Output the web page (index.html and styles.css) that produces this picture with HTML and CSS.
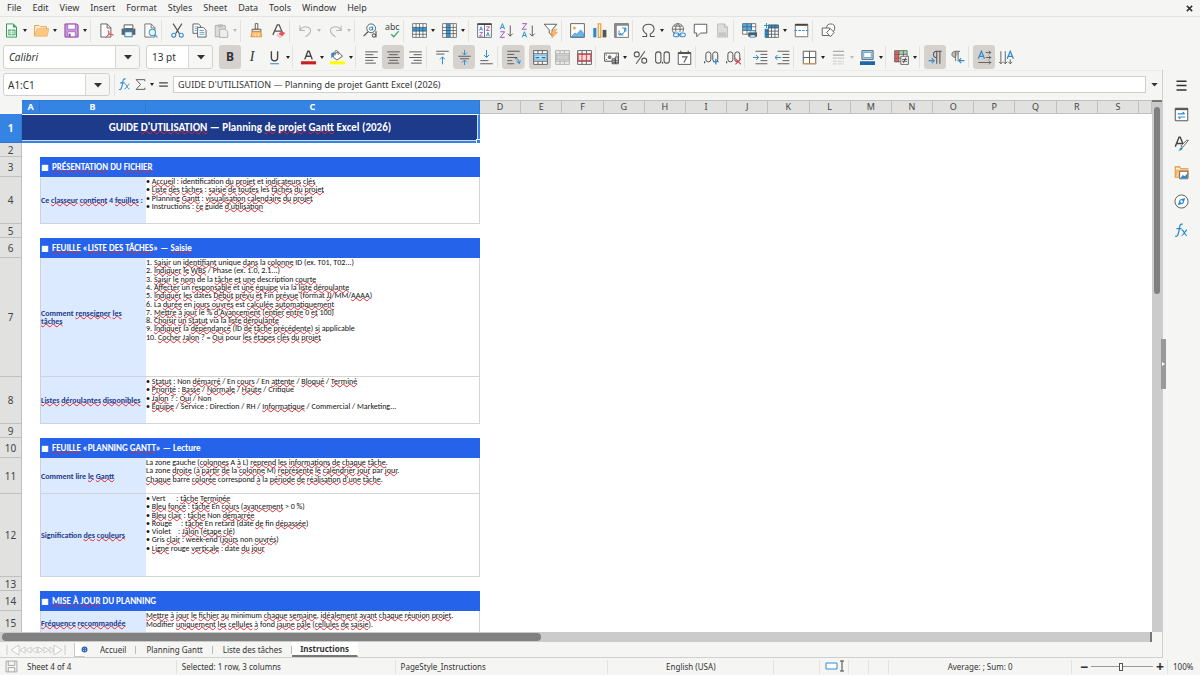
FILE: index.html
```html
<!DOCTYPE html>
<html lang="fr">
<head>
<meta charset="utf-8">
<title>Planning de projet Gantt</title>
<link rel="stylesheet" href="styles.css">
</head>
<body>
<svg class="sprite" aria-hidden="true">
  <symbol id="new" viewBox="0 0 24 24"><path d="M4 1.500h11l5 5v16H4z" fill="#fff" stroke="#2f9e56" stroke-width="1.600"/><path d="M14.500 1v6H20z" fill="#2f9e56"/><path d="M7 11h11v8H7z" fill="#7cc98f" stroke="#2f9e56"/><path d="M7 14h11M7 16.500h11M12 11v8" stroke="#fff"/></symbol>
  <symbol id="open" viewBox="0 0 24 24"><path d="M1 21V4h7l2 2h10v5" fill="#fff3df" stroke="#eb9a3a" stroke-width="1.500"/><path d="M1 21 5 9h19l-3 12z" fill="#fdc884" stroke="#f0a64d"/></symbol>
  <symbol id="save" viewBox="0 0 24 24"><path d="M1.500 1.500h19l2 2v19h-21z" fill="#c99adb" stroke="#9346a8" stroke-width="1.600"/><path d="M6 2h12v8H6zM6 14h12v8H6z" fill="#fff" stroke="#9346a8"/><path d="M9 17v5" stroke="#9346a8" stroke-width="3"/></symbol>
  <symbol id="pdf" viewBox="0 0 24 24"><path d="M3 1.500h10l6 6v15H3z" fill="#fff" stroke="#555" stroke-width="1.400"/><path d="M13 2v6h6" fill="none" stroke="#555" stroke-width="1.400"/><path d="M11 23c4-3 6-8 4-11-2 1 3 8 8 7-4-2-10 0-12 4z" fill="#fbb" stroke="#e0434c" stroke-width="1.300"/></symbol>
  <symbol id="print" viewBox="0 0 24 24"><path d="M5 3h14v6H5z" fill="#fff" stroke="#555" stroke-width="1.500"/><path d="M1 9h22v10H1z" fill="#5b6268"/><path d="M6 14h12v8H6z" fill="#eef6fc" stroke="#287cb7" stroke-width="1.500"/><path d="M3 11.500h18" stroke="#2e8acb"/></symbol>
  <symbol id="preview" viewBox="0 0 24 24"><path d="M3 1.500h10l6 6v15H3z" fill="#fff" stroke="#666" stroke-width="1.400"/><path d="M13 2v6h6" fill="none" stroke="#666" stroke-width="1.400"/><circle cx="15" cy="15" r="5" fill="#e6f3fb" stroke="#4a9bd3" stroke-width="1.700"/><path d="m18.500 18.500 4.500 4.500" stroke="#4a9bd3" stroke-width="2"/></symbol>
  <symbol id="cut" viewBox="0 0 24 24"><path d="m5 1 10 16M19 1 9 17" stroke="#555" stroke-width="1.800"/><circle cx="6" cy="19.500" r="3.200" fill="none" stroke="#318bce" stroke-width="1.700"/><circle cx="18" cy="19.500" r="3.200" fill="none" stroke="#318bce" stroke-width="1.700"/></symbol>
  <symbol id="copy" viewBox="0 0 24 24"><path d="M1.500 1.500h9l3 3v12h-12z" fill="#fff" stroke="#555" stroke-width="1.400"/><path d="M4 6h6M4 9h6M4 12h4" stroke="#338bc9"/><path d="M9 7h9l4.500 4.500v11H9z" fill="#fff" stroke="#555" stroke-width="1.400"/><path d="M12 12h7M12 15h8M12 18h8" stroke="#338bc9" stroke-width="1.200"/></symbol>
  <symbol id="paste" viewBox="0 0 24 24"><path d="M2 4h16v18H2z" fill="#dcdcda" stroke="#aaa" stroke-width="1.400"/><path d="M6 2h8v5H6z" fill="#bbb"/><path d="M9 10h9l4 4v9H9z" fill="#eee" stroke="#aaa" stroke-width="1.400"/></symbol>
  <symbol id="brush" viewBox="0 0 24 24"><path d="M10 1h4v9h-4z" fill="#fff" stroke="#555" stroke-width="1.500"/><path d="M5 10h14v4H5z" fill="#e8e8e8" stroke="#555" stroke-width="1.500"/><path d="M5 14h14l1 8H3z" fill="#fbc57f" stroke="#e69036" stroke-width="1.600"/><path d="M10 17v5m5-5v5" stroke="#fff"/></symbol>
  <symbol id="clear" viewBox="0 0 24 24"><path d="M3 19 10 3h3l6 14M6 13h11" fill="none" stroke="#555" stroke-width="2"/><path d="m9 20 8-7 6 3-8 8z" fill="#e9525a"/><path d="m9 20 3-3 6 4-3 3z" fill="#fcc"/></symbol>
  <symbol id="undo" viewBox="0 0 24 24"><path d="M3 4v8h8M3 12C8 3 22 5 20 14c-1 3-3 5-8 8" fill="none" stroke="#b7b7b5" stroke-width="1.700"/></symbol>
  <symbol id="redo" viewBox="0 0 24 24"><path d="M21 4v8h-8M21 12C16 3 2 5 4 14c1 3 3 5 8 8" fill="none" stroke="#b7b7b5" stroke-width="1.700"/></symbol>
  <symbol id="row" viewBox="0 0 24 24"><path d="M1 1h22v22H1z" fill="#fff"/><path d="M1 7h22v6H1z" fill="#2e9be6"/><path d="M1 1h22v22H1zM1 7h22M1 13h22M1 18h22M6.500 1v22M12 1v22M17.500 1v22" fill="none" stroke="#4d5559" stroke-width="1.200"/></symbol>
  <symbol id="col" viewBox="0 0 24 24"><path d="M1 1h22v22H1z" fill="#fff"/><path d="M7 1h6v22H7z" fill="#2e9be6"/><path d="M1 1h22v22H1zM1 7h22M1 12h22M1 17h22M7 1v22M13 1v22M18 1v22" fill="none" stroke="#4d5559" stroke-width="1.200"/></symbol>
  <symbol id="sort" viewBox="0 0 24 24"><path d="M1 1h22v22H1zM12 1v22" fill="#fff" stroke="#555" stroke-width="1.300"/><path d="M1 2h22" stroke="#444" stroke-width="2.500"/><g fill="none" stroke-width="1.400"><path d="m4 12 2.500-6L9 12M5 10h3M15 21l2.500-6 2.500 6M16 19h3" stroke="#2b8ad0"/><path d="M4 15h5l-5 6h5M15 6h5l-5 6h5" stroke="#a04db8"/></g></symbol>
  <symbol id="asc" viewBox="0 0 24 24"><g fill="none" stroke-width="1.500"><path d="m2 10 3.500-9L9 10M3 7h5" stroke="#2b8ad0"/><path d="M2 14h7l-7 9h7" stroke="#a04db8"/><path d="M18 4v17m-4-4 4 4 4-4" stroke="#555"/></g></symbol>
  <symbol id="desc" viewBox="0 0 24 24"><g fill="none" stroke-width="1.500"><path d="m2 23 3.500-9L9 23M3 20h5" stroke="#2b8ad0"/><path d="M2 1h7l-7 9h7" stroke="#a04db8"/><path d="M18 4v17m-4-4 4 4 4-4" stroke="#555"/></g></symbol>
  <symbol id="filter" viewBox="0 0 24 24"><path d="M2 2h20l-7.500 9v9L10 16v-5z" fill="#fff" stroke="#555" stroke-width="1.500"/><path d="m18 10-6 8h4l-2 6 9-9h-5l4-5z" fill="#fbbd6b" stroke="#ec9733"/></symbol>
  <symbol id="image" viewBox="0 0 24 24"><path d="M1 1h22v22H1z" fill="#fff" stroke="#555" stroke-width="1.400"/><circle cx="7" cy="8" r="2.500" fill="#f3a84d"/><path d="m2 22 6-6 3 2 6-7 5 6v5z" fill="#6eb4e4" stroke="#2583c5"/></symbol>
  <symbol id="chart" viewBox="0 0 24 24"><path d="M2 8h5v15H2z" fill="#2e8acb"/><path d="M10 1.500h4V23h-4z" fill="#fff0d8" stroke="#e9a13e" stroke-width="2"/><path d="M17 11h6v12h-6z" fill="#555"/></symbol>
  <symbol id="pivot" viewBox="0 0 24 24"><path d="M1 1h22v22H1z" fill="#fff" stroke="#666" stroke-width="1.400"/><path d="M1 3h22M3 1v22" stroke="#888" stroke-width="3"/><path d="M13 8h6v6m-3-3 3-3M8 12v7h7m-7 0 3-3M17 9c1 6-2 9-8 9" fill="none" stroke="#318bce" stroke-width="1.600"/></symbol>
  <symbol id="omega" viewBox="0 0 24 24"><path d="M2 21.500h7v-4C-1 11 3 2 12 2s13 9 3 15.500v4h7" fill="none" stroke="#555" stroke-width="1.700"/></symbol>
  <symbol id="link" viewBox="0 0 24 24"><path d="M11 1a9 9 0 1 0 .1 0M11 1c-5 5-5 13 0 18M11 1c5 5 5 13 0 18M2 10h18M4 5h14M4 15h14" fill="none" stroke="#555" stroke-width="1.300"/><path d="M6 14h18v10H6z" fill="#f5f5f3"/><rect x="4" y="16" width="9" height="6" rx="3" fill="none" stroke="#318bce" stroke-width="1.700"/><rect x="14" y="16" width="9" height="6" rx="3" fill="none" stroke="#318bce" stroke-width="1.700"/><path d="M10 19h7" stroke="#318bce" stroke-width="1.700"/></symbol>
  <symbol id="comment" viewBox="0 0 24 24"><path d="M2 2h20v14H12l-6 6v-6H2z" fill="#fff" stroke="#555" stroke-width="1.500"/></symbol>
  <symbol id="page" viewBox="0 0 24 24"><path d="M4 1.500h11l5 5v16H4z" fill="#ddd" stroke="#bbb" stroke-width="1.400"/><path d="M6 15h12v6H6z" fill="#c5c5c5"/><path d="M15 1v6h5" fill="none" stroke="#aaa"/></symbol>
  <symbol id="printarea" viewBox="0 0 24 24"><path d="M1 1h21v17H1z" fill="#fff"/><path d="M1 1h15v11H1z" fill="#56aee7"/><path d="M1 1h21v17H1zM1 6h21M1 12h21M8 1v17M15 1v17" fill="none" stroke="#4d5559" stroke-width="1.200"/><path d="M10 15h14v7H10z" fill="#555"/><path d="M13 12h8v3h-8zM13 19h8v4h-8z" fill="#cfe8f8" stroke="#287cb7"/></symbol>
  <symbol id="freeze" viewBox="0 0 24 24"><path d="M1 3h22v20H1z" fill="#fff"/><path d="M7 3h16v5H7zM1 9h6v14H1z" fill="#2e8acb"/><path d="M7 3h16v20H2M2 13h21M2 18h21M7 8h16M12 3v20M17.500 3v20M7 3v20" fill="none" stroke="#4d5559" stroke-width="1.300"/><path d="M4 0v8M0 4h8" stroke="#2e8acb" stroke-width="1.500"/></symbol>
  <symbol id="split" viewBox="0 0 24 24"><path d="M2 2h20v20H2z" fill="#fff" stroke="#666" stroke-width="1.400"/><path d="M2 3h20" stroke="#444" stroke-width="3"/><path d="M1 12h22" stroke="#318bce" stroke-width="1.600" stroke-dasharray="4 2"/></symbol>
  <symbol id="shapes" viewBox="0 0 24 24"><circle cx="15.500" cy="8" r="6.500" fill="#fff" stroke="#555" stroke-width="1.400"/><path d="M2 8h12v12H2z" fill="#fff" stroke="#555" stroke-width="1.400"/><path d="m15 9 6 6-6 7-6-7z" fill="#fff" stroke="#555" stroke-width="1.400"/></symbol>
  <symbol id="underline" viewBox="0 0 24 24"><path d="M7 2v10c0 7 10 7 10 0V2" fill="none" stroke="#444" stroke-width="2.200"/><path d="M5 22h14" stroke="#3a87d6" stroke-width="1.700"/></symbol>
  <symbol id="fontcolor" viewBox="0 0 24 24"><path d="m6 15 5-13h2l5 13M8 10h8" fill="none" stroke="#444" stroke-width="2.200"/><path d="M0 18h24v5H0z" fill="#c9211e"/></symbol>
  <symbol id="fill" viewBox="0 0 24 24"><path d="m4 8 9-5 7 7-9 6-5-4z" fill="#fff" stroke="#555" stroke-width="1.500"/><path d="M8 9V2c3-3 6 0 5 6" fill="none" stroke="#555" stroke-width="1.300"/><path d="m7 3-5 2v8l4-4z" fill="#2e8acb"/><path d="M0 18h24v5H0z" fill="#ff0"/></symbol>
  <symbol id="left" viewBox="0 0 24 24"><path d="M2 3h20M2 7.500h13M2 12h20M2 16.500h13M2 21h17" stroke="#555" stroke-width="1.500"/></symbol>
  <symbol id="center" viewBox="0 0 24 24"><path d="M2 3h20M5 7.500h14M2 12h20M5 16.500h14M3 21h18" stroke="#555" stroke-width="1.500"/></symbol>
  <symbol id="right" viewBox="0 0 24 24"><path d="M2 3h20M9 7.500h13M2 12h20M9 16.500h13M5 21h17" stroke="#555" stroke-width="1.500"/></symbol>
  <symbol id="top" viewBox="0 0 24 24"><path d="M2 2h20M2 6.500h13" stroke="#555" stroke-width="1.500"/><path d="M12 23V11m-4 4 4-4 4 4" fill="none" stroke="#318bce" stroke-width="1.600"/></symbol>
  <symbol id="middle" viewBox="0 0 24 24"><path d="M2 10h20M5 14h14" stroke="#555" stroke-width="1.500"/><path d="M12 0v8M8 4l4 4 4-4M12 24v-8m-4 4 4-4 4 4" fill="none" stroke="#318bce" stroke-width="1.500"/></symbol>
  <symbol id="bottom" viewBox="0 0 24 24"><path d="M2 17h13M2 22h20" stroke="#555" stroke-width="1.500"/><path d="M12 0v12m-4-4 4 4 4-4" fill="none" stroke="#318bce" stroke-width="1.600"/></symbol>
  <symbol id="wrap" viewBox="0 0 24 24"><path d="M2 2h20M2 7h11M2 12h16M2 17h8M2 22h11" stroke="#555" stroke-width="1.500"/><path d="M14 14c5-1 7 2 7 7m-4-4 4 5 2-5" fill="none" stroke="#318bce" stroke-width="1.600"/></symbol>
  <symbol id="merge" viewBox="0 0 24 24"><path d="M1 1h22v22H1zM1 6h22M1 18h22M8 1v5M15 1v5M8 18v5M15 18v5" fill="#fff" stroke="#555" stroke-width="1.400"/><path d="M2 8h20v8H2z" fill="#bfe0f6" stroke="#318bce"/><path d="M4 12h6M14 12h6" stroke="#1c74b8" stroke-width="2"/></symbol>
  <symbol id="merge2" viewBox="0 0 24 24"><path d="M1 1h22v22H1zM1 6h22M1 18h22M8 1v5M15 1v5M8 18v5M15 18v5" fill="#eee" stroke="#aaa" stroke-width="1.400"/><path d="M2 8h20v8H2z" fill="#d0d0d0" stroke="#aaa"/></symbol>
  <symbol id="unmerge" viewBox="0 0 24 24"><path d="M1 1h22v22H1zM1 6h22M1 18h22M8 1v22M15 1v22" fill="#fff" stroke="#555" stroke-width="1.400"/><path d="M2 7h20v10H2zM8 7v10M15 7v10" fill="#fdd" stroke="#d8343c" stroke-width="1.500"/></symbol>
  <symbol id="money" viewBox="0 0 24 24"><path d="M1 5h22v13H1z" fill="#fff" stroke="#555" stroke-width="1.600"/><circle cx="9" cy="11.500" r="3" fill="#777"/><path d="M3 8h2M3 15h2M19 8h2" stroke="#555" stroke-width="1.500"/><path d="M13 14h5v8h-5zM18 11h5v11h-5z" fill="#ccc" stroke="#444" stroke-width="1.300"/><path d="M13 17h10M13 20h10" stroke="#444"/></symbol>
  <symbol id="percent" viewBox="0 0 24 24"><path d="M19 2 5 22" stroke="#555" stroke-width="1.700"/><circle cx="6" cy="7" r="4" fill="none" stroke="#555" stroke-width="1.700"/><circle cx="18" cy="17" r="4" fill="none" stroke="#555" stroke-width="1.700"/></symbol>
  <symbol id="decimal" viewBox="0 0 24 24"><g fill="none" stroke="#555" stroke-width="1.700"><rect x="1" y="3" width="8.500" height="18" rx="4"/><rect x="14.500" y="3" width="8.500" height="18" rx="4"/></g><path d="M11 19h2v3h-2z" fill="#555"/></symbol>
  <symbol id="date" viewBox="0 0 24 24"><path d="M2 4h20v19H2z" fill="#fff" stroke="#555" stroke-width="1.500"/><path d="M2 5h20" stroke="#555" stroke-width="3"/><path d="M6 1v4M18 1v4M8 11h8l-5 9" fill="none" stroke="#555" stroke-width="1.800"/></symbol>
  <symbol id="addDec" viewBox="0 0 24 24"><g fill="none" stroke="#555" stroke-width="1.600"><rect x="3" y="3" width="8" height="16" rx="4"/><rect x="14" y="3" width="8" height="16" rx="4"/></g><path d="M0 18h2v3H0z" fill="#555"/><path d="M19 14v9M14.500 18.500h9" stroke="#318bce" stroke-width="2"/></symbol>
  <symbol id="delDec" viewBox="0 0 24 24"><g fill="none" stroke="#555" stroke-width="1.600"><rect x="3" y="3" width="8" height="16" rx="4"/><rect x="14" y="3" width="8" height="16" rx="4"/></g><path d="M0 18h2v3H0z" fill="#555"/><path d="m15 14 9 9m0-9-9 9" stroke="#e0434c" stroke-width="1.700"/></symbol>
  <symbol id="indent" viewBox="0 0 24 24"><path d="M4 2h19M12 7h11M12 12h11M12 17h11M4 22h19" stroke="#555" stroke-width="1.500"/><path d="M0 12h9M5 8l4 4-4 4" fill="none" stroke="#318bce" stroke-width="1.600"/></symbol>
  <symbol id="outdent" viewBox="0 0 24 24"><path d="M4 2h19M12 7h11M12 12h11M12 17h11M4 22h19" stroke="#555" stroke-width="1.500"/><path d="M0 12h10M4 8l-4 4 4 4" fill="none" stroke="#318bce" stroke-width="1.600"/></symbol>
  <symbol id="borders" viewBox="0 0 24 24"><path d="M2 2h20v20H2zM12 2v20M2 12h20" fill="#fff" stroke="#555" stroke-width="1.500"/><path d="M1 22h22" stroke="#ee9f42" stroke-width="1.500"/></symbol>
  <symbol id="lines" viewBox="0 0 24 24"><path d="M3 2h18M3 8h18" stroke="#aaa" stroke-width="2"/><path d="M3 13h18" stroke="#bbb" stroke-width="2" stroke-dasharray="3 1"/><path d="M3 18h18M3 22h18" stroke="#bbb" stroke-width="2" stroke-dasharray="1 1"/></symbol>
  <symbol id="bordercolor" viewBox="0 0 24 24"><path d="M3 1h18v14H3z" fill="#a9d5f3" stroke="#555" stroke-width="1.400"/><path d="M6 4h12v8H6z" fill="#fff" stroke="#318bce"/><path d="M0 18h24v6H0z" fill="#1f65a9"/></symbol>
  <symbol id="cond" viewBox="0 0 24 24"><path d="M1 1h20v18H1z" fill="#fff"/><path d="M1 1h7v6H1zM1 13h7v6H1z" fill="#e85d5d"/><path d="M8 1h13v6H8z" fill="#9bdaa6"/><path d="M1 7h7v6H1z" fill="#e85d5d"/><path d="M1 1h20v18H1zM1 7h20M1 13h20M8 1v18M15 1v18" fill="none" stroke="#555" stroke-width="1.200"/><path d="M11 10h12v13H11z" fill="#fff" stroke="#555" stroke-width="1.400"/><path d="M13 15h8M13 18h8M19 12l-4 9" stroke="#333" stroke-width="1.300"/></symbol>
  <symbol id="ltr" viewBox="0 0 24 24"><path d="M14 12c-7 0-7-10 0-10h8M14 2v20M19 2v20" fill="none" stroke="#555" stroke-width="1.700"/><path d="M1 17h9m-4-4 4 4-4 4" fill="none" stroke="#318bce" stroke-width="1.700"/></symbol>
  <symbol id="rtl" viewBox="0 0 24 24"><path d="M9 12C1 12 1 2 9 2h7M9 2v16M13 2v16" fill="#bbb" stroke="#777" stroke-width="1.600"/><path d="M23 17h-9m4-4-4 4 4 4" fill="none" stroke="#318bce" stroke-width="1.700"/></symbol>
  <symbol id="dirh" viewBox="0 0 24 24"><path d="m2 14 5-12 5 12M4 10h6" fill="none" stroke="#318bce" stroke-width="2"/><path d="M14 4h8m-3-3 3 3-3 3M14 12h8m-3-3 3 3-3 3M2 20h20m-3-3 3 3-3 3" fill="none" stroke="#555" stroke-width="1.400"/></symbol>
  <symbol id="dirv" viewBox="0 0 24 24"><path d="m13 14 5-12 5 12M15 10h6" fill="none" stroke="#318bce" stroke-width="2"/><path d="M3 2v20m-3-3 3 3 3-3M10 2v20m-3-3 3 3 3-3M18 15v7m-3-3 3 3 3-3" fill="none" stroke="#555" stroke-width="1.400"/></symbol>
  <symbol id="fx" viewBox="0 0 24 24"><path d="M14 2c-5-2-5 5-6 10s-2 11-6 9M4 9h8" fill="none" stroke="#2a86cf" stroke-width="1.900"/><path d="M12 11c4-1 5 10 9 9M21 11c-3 0-6 10-9 9" fill="none" stroke="#2a86cf" stroke-width="1.800"/></symbol>
  <symbol id="sigma" viewBox="0 0 24 24"><path d="M20 6V3H4l8 9-8 9h16v-3" fill="none" stroke="#555" stroke-width="1.700"/></symbol>
  <symbol id="equals" viewBox="0 0 24 24"><path d="M4 9h16M4 15h16" stroke="#444" stroke-width="2.400"/></symbol>
  <symbol id="down" viewBox="0 0 8 5"><path d="M0 0h8L4 4.500z" fill="currentColor"/></symbol>
  <symbol id="menu" viewBox="0 0 24 24"><path d="M4 5h16M4 12h16M4 19h16" stroke="#333" stroke-width="2.400"/></symbol>
  <symbol id="props" viewBox="0 0 24 24"><path d="M2 2h20v20H2z" fill="#fff" stroke="#555" stroke-width="1.600"/><path d="M2 3.500h20" stroke="#555" stroke-width="3"/><path d="M6 11h11m-3-3 3 3M18 16H7m3 3-3-3" fill="none" stroke="#318bce" stroke-width="1.700"/></symbol>
  <symbol id="styles" viewBox="0 0 24 24"><path d="m2 17 6-15h2l5 12M4 12h9" fill="none" stroke="#444" stroke-width="2.200"/><path d="m23 7-9 11-3-2 9-9z" fill="#fff" stroke="#555" stroke-width="1.400"/><path d="M6 23c4 0 3-6 7-5 2 2 0 6-7 5z" fill="#2e8acb"/></symbol>
  <symbol id="gallery" viewBox="0 0 24 24"><path d="M2 20V3h7l2 3h12" fill="#fff3df" stroke="#e88f32" stroke-width="1.700"/><path d="M4 8h19v12H2z" fill="#fcc47d" stroke="#e88f32"/><path d="M9 10h13v12H9z" fill="#fff" stroke="#555" stroke-width="1.400"/><path d="m10 21 4-5 3 2 4-4v7z" fill="#2e8acb"/></symbol>
  <symbol id="navigator" viewBox="0 0 24 24"><circle cx="12" cy="12" r="10.500" fill="#fff" stroke="#555" stroke-width="1.500"/><path d="m18 6-3 9-9 3 3-9z" fill="#2e8acb"/><circle cx="12" cy="12" r="2" fill="#fff"/></symbol>
  <symbol id="floppy" viewBox="0 0 24 24"><path d="M2 2h20v20H2zM6 2v8h12V2M6 22v-8h12v8" fill="none" stroke="#999" stroke-width="1.500"/></symbol>
  <symbol id="sheetnav" viewBox="0 0 60 12"><path d="M1 1v10M13 1 5 6l8 5zM19 3l-5 3 5 3zM25 3l-5 3 5 3zM31 3l-5 3 5 3zM32 3l5 3-5 3zM38 3l5 3-5 3zM44 3l4 3-4 3zM48 1l8 5-8 5zM59 1v10" fill="#fff" stroke="#ccc"/></symbol>
  <symbol id="addsheet" viewBox="0 0 14 14"><path d="M1 0h11v14H1z" fill="#fff"/><path d="M0 14V0m0 14h11" stroke="#bbb" stroke-width="1.500"/><circle cx="10.500" cy="6.500" r="2.300" fill="#fff" stroke="#2f65b5" stroke-width="1.400"/><path d="M10.500 5v3M9 6.500h3" stroke="#2f65b5"/></symbol>
  <symbol id="selmode" viewBox="0 0 20 12"><path d="M1 3h11v6H1z" fill="#fff" stroke="#318bce"/><path d="M15 1h4M17 1v10M15 11h4" stroke="#444"/></symbol>
  <symbol id="close" viewBox="0 0 8 8"><path d="m1 1 6 6m0-6L1 7" stroke="#333" stroke-width="1.800"/></symbol>
</svg>

<header>
  <nav class="menubar" aria-label="Menu">
    <button>File</button><button>Edit</button><button>View</button><button>Insert</button><button>Format</button><button>Styles</button><button>Sheet</button><button>Data</button><button>Tools</button><button>Window</button><button>Help</button>
    <button class="close" aria-label="Close"><svg><use href="#close"/></svg></button>
  </nav>
  <div class="toolbar standard" role="toolbar" aria-label="Standard">
    <button class="tb drop" aria-label="New"><svg><use href="#new"/></svg></button><button class="tb drop" aria-label="Open"><svg><use href="#open"/></svg></button><button class="tb drop" aria-label="Save"><svg><use href="#save"/></svg></button>
    <i class="sep"></i>
    <button class="tb" aria-label="Export PDF"><svg><use href="#pdf"/></svg></button><button class="tb" aria-label="Print"><svg><use href="#print"/></svg></button><button class="tb" aria-label="Preview"><svg><use href="#preview"/></svg></button>
    <i class="sep"></i>
    <button class="tb" aria-label="Cut"><svg><use href="#cut"/></svg></button><button class="tb" aria-label="Copy"><svg><use href="#copy"/></svg></button><button class="tb drop off" aria-label="Paste"><svg><use href="#paste"/></svg></button>
    <i class="sep"></i>
    <button class="tb" aria-label="Clone formatting"><svg><use href="#brush"/></svg></button><button class="tb" aria-label="Clear formatting"><svg><use href="#clear"/></svg></button>
    <i class="sep"></i>
    <button class="tb drop off" aria-label="Undo"><svg><use href="#undo"/></svg></button><button class="tb drop off" aria-label="Redo"><svg><use href="#redo"/></svg></button>
    <i class="sep"></i>
    <button class="tb" aria-label="Find and replace"><svg viewBox="0 0 24 24"><circle cx="13" cy="8.500" r="7" fill="#fff" stroke="#555" stroke-width="1.500"/><path d="m8 14-7 7" stroke="#555" stroke-width="2"/><circle cx="12.500" cy="9" r="2.500" fill="none" stroke="#1d88d2" stroke-width="1.600"/><path d="M15.500 5.500V12" stroke="#1d88d2" stroke-width="1.600"/><circle cx="17.500" cy="20" r="2.700" fill="#f5f5f3" stroke="#444" stroke-width="1.600"/><path d="M20.800 13v10" stroke="#444" stroke-width="1.600"/></svg></button><button class="tb" aria-label="Spelling"><svg class="abc" viewBox="0 0 24 24"><text x="0" y="11">abc</text><path d="m10 18 4 4 8-9" fill="none" stroke="#35a96b" stroke-width="2"/></svg></button>
    <i class="sep"></i>
    <button class="tb drop" aria-label="Row"><svg><use href="#row"/></svg></button><button class="tb drop" aria-label="Column"><svg><use href="#col"/></svg></button>
    <i class="sep"></i>
    <button class="tb" aria-label="Sort"><svg><use href="#sort"/></svg></button><button class="tb" aria-label="Sort ascending"><svg><use href="#asc"/></svg></button><button class="tb" aria-label="Sort descending"><svg><use href="#desc"/></svg></button><button class="tb" aria-label="AutoFilter"><svg><use href="#filter"/></svg></button>
    <i class="sep"></i>
    <button class="tb" aria-label="Image"><svg><use href="#image"/></svg></button><button class="tb" aria-label="Chart"><svg><use href="#chart"/></svg></button><button class="tb" aria-label="Pivot table"><svg><use href="#pivot"/></svg></button>
    <i class="sep"></i>
    <button class="tb drop" aria-label="Special character"><svg><use href="#omega"/></svg></button><button class="tb" aria-label="Hyperlink"><svg><use href="#link"/></svg></button><button class="tb" aria-label="Comment"><svg><use href="#comment"/></svg></button><button class="tb" aria-label="Headers and footers"><svg><use href="#page"/></svg></button>
    <i class="sep"></i>
    <button class="tb" aria-label="Print area"><svg><use href="#printarea"/></svg></button><button class="tb drop" aria-label="Freeze"><svg><use href="#freeze"/></svg></button><button class="tb" aria-label="Split window"><svg><use href="#split"/></svg></button>
    <i class="sep"></i>
    <button class="tb" aria-label="Draw functions"><svg><use href="#shapes"/></svg></button>
  </div>
  <div class="toolbar formatting" role="toolbar" aria-label="Formatting">
    <span class="combo font"><select aria-label="Font name"><option>Calibri</option></select><svg><use href="#down"/></svg></span>
    <span class="combo size"><select aria-label="Font size"><option>13 pt</option></select><svg><use href="#down"/></svg></span>
    <button class="tb on letter" aria-label="Bold"><b>B</b></button><button class="tb letter" aria-label="Italic"><em>I</em></button><button class="tb drop" aria-label="Underline"><svg><use href="#underline"/></svg></button>
    <i class="sep"></i>
    <button class="tb drop" aria-label="Font color"><svg><use href="#fontcolor"/></svg></button><button class="tb drop" aria-label="Background color"><svg><use href="#fill"/></svg></button>
    <i class="sep"></i>
    <button class="tb" aria-label="Align left"><svg><use href="#left"/></svg></button><button class="tb on" aria-label="Center"><svg><use href="#center"/></svg></button><button class="tb" aria-label="Align right"><svg><use href="#right"/></svg></button>
    <i class="sep"></i>
    <button class="tb" aria-label="Align top"><svg><use href="#top"/></svg></button><button class="tb on" aria-label="Center vertically"><svg><use href="#middle"/></svg></button><button class="tb" aria-label="Align bottom"><svg><use href="#bottom"/></svg></button>
    <i class="sep"></i>
    <button class="tb on" aria-label="Wrap text"><svg><use href="#wrap"/></svg></button>
    <i class="sep"></i>
    <button class="tb on" aria-label="Merge and center"><svg><use href="#merge"/></svg></button><button class="tb" aria-label="Merge cells"><svg><use href="#merge2"/></svg></button><button class="tb" aria-label="Unmerge cells"><svg><use href="#unmerge"/></svg></button>
    <i class="sep"></i>
    <button class="tb drop" aria-label="Currency"><svg><use href="#money"/></svg></button><button class="tb" aria-label="Percent"><svg><use href="#percent"/></svg></button><button class="tb" aria-label="Number"><svg><use href="#decimal"/></svg></button><button class="tb" aria-label="Date"><svg><use href="#date"/></svg></button>
    <i class="sep"></i>
    <button class="tb" aria-label="Add decimal place"><svg><use href="#addDec"/></svg></button><button class="tb" aria-label="Delete decimal place"><svg><use href="#delDec"/></svg></button>
    <i class="sep"></i>
    <button class="tb" aria-label="Increase indent"><svg><use href="#indent"/></svg></button><button class="tb" aria-label="Decrease indent"><svg><use href="#outdent"/></svg></button>
    <i class="sep"></i>
    <button class="tb drop" aria-label="Borders"><svg><use href="#borders"/></svg></button><button class="tb drop off" aria-label="Border style"><svg><use href="#lines"/></svg></button><button class="tb drop" aria-label="Border color"><svg><use href="#bordercolor"/></svg></button>
    <i class="sep"></i>
    <button class="tb drop" aria-label="Conditional formatting"><svg><use href="#cond"/></svg></button>
    <i class="sep"></i>
    <button class="tb on" aria-label="Left to right"><svg><use href="#ltr"/></svg></button><button class="tb" aria-label="Right to left"><svg><use href="#rtl"/></svg></button>
    <i class="sep"></i>
    <button class="tb on" aria-label="Horizontal text"><svg><use href="#dirh"/></svg></button><button class="tb" aria-label="Vertical text"><svg><use href="#dirv"/></svg></button>
  </div>
</header>

<main>
  <section class="work">
    <div class="formulabar">
      <span class="combo name"><input aria-label="Name box" value="A1:C1"><svg><use href="#down"/></svg></span>
      <i class="sep"></i>
      <button class="tb small" aria-label="Function wizard"><svg><use href="#fx"/></svg></button><button class="tb small drop" aria-label="Sum"><svg><use href="#sigma"/></svg></button><button class="tb small" aria-label="Formula"><svg><use href="#equals"/></svg></button>
      <input class="formula" aria-label="Input line" value="GUIDE D'UTILISATION — Planning de projet Gantt Excel (2026)">
      <button class="expand" aria-label="Expand formula bar"><svg><use href="#down"/></svg></button>
    </div>
    <div class="sheetarea">
      <div class="viewport">
        <table>
          <colgroup><col class="cn"><col class="ca"><col class="cb"><col class="cc"><col><col><col><col><col><col><col><col><col><col><col><col><col><col><col><col><col class="ct"></colgroup>
          <thead><tr><th class="corner"></th><th class="sel">A</th><th class="sel">B</th><th class="sel">C</th><th>D</th><th>E</th><th>F</th><th>G</th><th>H</th><th>I</th><th>J</th><th>K</th><th>L</th><th>M</th><th>N</th><th>O</th><th>P</th><th>Q</th><th>R</th><th>S</th><th></th></tr></thead>
          <tbody>
            <tr class="r-title"><th class="sel">1</th><td class="title" colspan="3">GUIDE <u>D'UTILISATION</u> — Planning <u>de</u> <u>projet</u> <u>Gantt</u> Excel (2026)<i class="handle"></i></td><td colspan="17"></td></tr>
            <tr class="r-gap"><th>2</th><td colspan="20"></td></tr>
            <tr class="r-head"><th>3</th><td></td><td class="section" colspan="2"><i class="sq">■</i><u>PRÉSENTATION</u> DU <u>FICHIER</u></td><td colspan="17"></td></tr>
            <tr class="r-four"><th>4</th><td></td><td class="label">Ce <u>classeur</u> <u>contient</u> 4 <u>feuilles</u> :</td><td class="text"><div class="lines n4"><p>• <u>Accueil</u> : identification <u>du</u> <u>projet</u> et <u>indicateurs</u> <u>clés</u></p><p>• <u>Liste</u> <u>des</u> <u>tâches</u> : <u>saisie</u> <u>de</u> <u>toutes</u> les <u>tâches</u> <u>du</u> <u>projet</u></p><p>• Planning <u>Gantt</u> : <u>visualisation</u> <u>calendaire</u> <u>du</u> <u>projet</u></p><p>• Instructions : <u>ce</u> guide <u>d'utilisation</u></p></div></td><td colspan="17"></td></tr>
            <tr class="r-gap"><th>5</th><td colspan="20"></td></tr>
            <tr class="r-head"><th>6</th><td></td><td class="section" colspan="2"><i class="sq">■</i><u>FEUILLE</u> «<u>LISTE</u> <u>DES</u> <u>TÂCHES</u>» — <u>Saisie</u></td><td colspan="17"></td></tr>
            <tr class="r-ten"><th>7</th><td></td><td class="label">Comment <u>renseigner</u> <u>les</u> <u>tâches</u></td><td class="text"><div class="lines n10"><p>1. <u>Saisir</u> un <u>identifiant</u> unique <u>dans</u> la <u>colonne</u> ID (ex. T01, T02...)</p><p>2. <u>Indiquer</u> <u>le</u> <u>WBS</u> / Phase (ex. 1.0, 2.1...)</p><p>3. <u>Saisir</u> <u>le</u> <u>nom</u> de la <u>tâche</u> <u>et</u> <u>une</u> description <u>courte</u></p><p>4. <u>Affecter</u> un <u>responsable</u> et <u>une</u> <u>équipe</u> via la <u>liste</u> <u>déroulante</u></p><p>5. <u>Indiquer</u> <u>les</u> dates <u>Début</u> <u>prévu</u> <u>et</u> Fin <u>prévue</u> (format <u>JJ</u>/MM/<u>AAAA</u>)</p><p>6. La <u>durée</u> en <u>jours</u> <u>ouvrés</u> est <u>calculée</u> <u>automatiquement</u></p><p>7. <u>Mettre</u> <u>à</u> <u>jour</u> le % <u>d'Avancement</u> (<u>entier</u> <u>entre</u> 0 <u>et</u> 100)</p><p>8. <u>Choisir</u> <u>un</u> <u>Statut</u> via la <u>liste</u> <u>déroulante</u></p><p>9. <u>Indiquer</u> la <u>dépendance</u> (ID <u>de</u> <u>tâche</u> <u>précédente</u>) <u>si</u> applicable</p><p>10. <u>Cocher</u> <u>Jalon</u> ? = <u>Oui</u> pour <u>les</u> <u>étapes</u> <u>clés</u> <u>du</u> <u>projet</u></p></div></td><td colspan="17"></td></tr>
            <tr class="r-lists"><th>8</th><td></td><td class="label"><u>Listes</u> <u>déroulantes</u> <u>disponibles</u></td><td class="text"><div class="lines n4"><p>• <u>Statut</u> : Non <u>démarré</u> / En <u>cours</u> / En <u>attente</u> / <u>Bloqué</u> / <u>Terminé</u></p><p>• <u>Priorité</u> : <u>Basse</u> / <u>Normale</u> / <u>Haute</u> / Critique</p><p>• <u>Jalon</u> ? : <u>Oui</u> / Non</p><p>• <u>Équipe</u> / Service : Direction / RH / <u>Informatique</u> / Commercial / Marketing...</p></div></td><td colspan="17"></td></tr>
            <tr class="r-gap"><th>9</th><td colspan="20"></td></tr>
            <tr class="r-head"><th>10</th><td></td><td class="section" colspan="2"><i class="sq">■</i><u>FEUILLE</u> «PLANNING <u>GANTT</u>» — Lecture</td><td colspan="17"></td></tr>
            <tr class="r-three"><th>11</th><td></td><td class="label">Comment lire <u>le</u> <u>Gantt</u></td><td class="text"><div class="lines n3"><p>La zone gauche (<u>colonnes</u> A <u>à</u> L) <u>reprend</u> <u>les</u> <u>informations</u> <u>de</u> <u>chaque</u> <u>tâche</u>.</p><p>La zone <u>droite</u> (<u>à</u> <u>partir</u> <u>de</u> la <u>colonne</u> M) <u>représente</u> <u>le</u> <u>calendrier</u> <u>jour</u> par <u>jour</u>.</p><p><u>Chaque</u> barre <u>colorée</u> correspond <u>à</u> la <u>période</u> <u>de</u> <u>réalisation</u> <u>d'une</u> <u>tâche</u>.</p></div></td><td colspan="17"></td></tr>
            <tr class="r-seven"><th>12</th><td></td><td class="label">Signification <u>des</u> <u>couleurs</u></td><td class="text"><div class="lines n7"><p>• Vert      : <u>tâche</u> <u>Terminée</u></p><p>• <u>Bleu</u> <u>foncé</u> : <u>tâche</u> En <u>cours</u> (<u>avancement</u> &gt; 0 %)</p><p>• <u>Bleu</u> <u>clair</u> : <u>tâche</u> Non <u>démarrée</u></p><p>• Rouge     : <u>tâche</u> En retard (date <u>de</u> fin <u>dépassée</u>)</p><p>• Violet    : <u>Jalon</u> (<u>étape</u> <u>clé</u>)</p><p>• Gris <u>clair</u> : week-end (<u>jours</u> non <u>ouvrés</u>)</p><p>• <u>Ligne</u> rouge <u>verticale</u> : date <u>du</u> <u>jour</u></p></div></td><td colspan="17"></td></tr>
            <tr class="r-gap"><th>13</th><td colspan="20"></td></tr>
            <tr class="r-head"><th>14</th><td></td><td class="section" colspan="2"><i class="sq">■</i><u>MISE</u> <u>À</u> <u>JOUR</u> DU PLANNING</td><td colspan="17"></td></tr>
            <tr class="r-two"><th>15</th><td></td><td class="label"><u>Fréquence</u> <u>recommandée</u></td><td class="text"><div class="lines n2"><p><u>Mettre</u> <u>à</u> <u>jour</u> <u>le</u> <u>fichier</u> <u>au</u> minimum <u>chaque</u> <u>semaine</u>, <u>idéalement</u> <u>avant</u> <u>chaque</u> <u>réunion</u> <u>projet</u>.</p><p>Modifier <u>uniquement</u> <u>les</u> <u>cellules</u> <u>à</u> fond <u>jaune</u> <u>pâle</u> (<u>cellules</u> <u>de</u> <u>saisie</u>).</p></div></td><td colspan="17"></td></tr>
          </tbody>
        </table>
      </div>
      <div class="vscroll"><i></i></div>
    </div>
    <div class="hscroll"><i></i></div>
    <nav class="tabs" aria-label="Sheets">
      <button class="navs" aria-label="Scroll sheets"><svg><use href="#sheetnav"/></svg></button>
      <button class="add" aria-label="Add sheet"><svg><use href="#addsheet"/></svg></button>
      <button class="tab">Accueil</button><button class="tab">Planning Gantt</button><button class="tab">Liste des tâches</button><button class="tab active">Instructions</button>
    </nav>
  </section>
  <aside>
    <button class="tb" aria-label="Sidebar settings"><svg><use href="#menu"/></svg></button>
    <button class="tb" aria-label="Properties"><svg><use href="#props"/></svg></button>
    <button class="tb" aria-label="Styles"><svg><use href="#styles"/></svg></button>
    <button class="tb" aria-label="Gallery"><svg><use href="#gallery"/></svg></button>
    <button class="tb" aria-label="Navigator"><svg><use href="#navigator"/></svg></button>
    <button class="tb" aria-label="Functions"><svg><use href="#fx"/></svg></button>
    <button class="grip" aria-label="Hide sidebar"></button>
  </aside>
</main>

<footer>
  <div class="doc"><svg class="disk"><use href="#floppy"/></svg><span>Sheet 4 of 4</span></div>
  <div>Selected: 1 row, 3 columns</div>
  <div>PageStyle_Instructions</div>
  <div class="mid lang">English (USA)</div>
  <div></div>
  <div><svg class="mode"><use href="#selmode"/></svg></div>
  <div></div>
  <div></div>
  <div class="mid">Average: ; Sum: 0</div>
  <div class="zoom"><button aria-label="Zoom out">−</button><input type="range" min="0" max="100" value="49" aria-label="Zoom"><button aria-label="Zoom in">+</button></div>
  <div>100%</div>
</footer>
</body>
</html>
```
FILE: styles.css
```css
* { box-sizing: border-box; }

body {
  margin: 0;
  height: 100vh;
  display: flex;
  flex-direction: column;
  overflow: hidden;
  background: #f5f5f3;
  color: #333;
  font: 9px/12px "Noto Sans", "Open Sans", sans-serif;
}

button, input, select { font: inherit; color: inherit; }
button { margin: 0; padding: 0; border: 0; background: none; }
svg { display: block; }
.sprite { position: absolute; width: 0; height: 0; }
.abc { overflow: visible; font-size: 14px; fill: #444; }

.menubar {
  display: flex;
  align-items: center;
  height: 17px;
  padding: 0 7px 0 2px;
  border-bottom: 1px solid #e3e3e1;
}
.menubar button { padding: 0 6px 0 5px; }
.menubar .close { margin-left: auto; padding: 0; }
.close svg { width: 7px; height: 7px; }

.toolbar { display: flex; align-items: center; height: 27px; }
.formatting { height: 26px; padding-left: 3px; }

.tb {
  display: flex;
  align-items: center;
  justify-content: center;
  flex: none;
  width: 22px;
  height: 24px;
  border-radius: 3px;
}
.tb svg { width: 15px; height: 15px; flex: none; }
.tb.on { background: #d5d2ce; }
.tb.drop { width: 30px; justify-content: flex-start; gap: 4px; padding-left: 4px; }
.formatting .drop { width: 29px; }
.tb.drop::after {
  content: "";
  border: 2px solid transparent;
  border-top: 3px solid #222;
  border-bottom: 0;
}
.tb.off::after { border-top-color: #bbb; }
.sep { flex: none; width: 5px; height: 22px; border-left: 1px solid #e2e2e0; }
.letter { font-size: 12px; }
.letter em { font-family: "Liberation Serif", serif; font-size: 14px; }

.combo {
  position: relative;
  display: flex;
  flex: none;
  height: 24px;
  border: 1px solid #d0d0ce;
  border-radius: 3px;
  background: #fff;
}
.combo select, .combo input {
  appearance: none;
  width: 100%;
  border: 0;
  outline: 0;
  padding: 0 24px 0 5px;
  font-size: 10px;
  background: linear-gradient(#d8d8d6, #d8d8d6) right 23px top / 1px 100% no-repeat, linear-gradient(#f6f6f4, #f6f6f4) right top / 23px 100% no-repeat;
  border-radius: 3px;
}
.combo svg { position: absolute; right: 7px; top: 9px; width: 8px; height: 5px; pointer-events: none; }
.font { width: 137px; margin-right: 6px; }
.font select { font-style: italic; }
.size { width: 67px; margin-right: 6px; }

main { flex: 1; display: flex; min-height: 0; }
.work { flex: 1; min-width: 0; display: flex; flex-direction: column; }

.formulabar { display: flex; align-items: center; height: 30px; padding: 0 0 2px 3px; border-top: 1px solid #ebebe9; }
.combo.name { width: 107px; height: 23px; margin-right: 4px; }
.name input { padding-left: 4px; }
.formulabar .sep { width: 3px; }
.small { width: 15px; }
.small svg { width: 13px; height: 13px; }
.tb.small.drop { width: 24px; padding-left: 2px; gap: 3px; }
.formula { flex: 1; min-width: 0; height: 17px; margin-left: 2px; padding: 0 4px; border: 1px solid #cfcfcd; background: #fff; outline: 0; }
.expand { width: 16px; display: flex; justify-content: center; }
.expand svg { width: 7px; height: 4px; }

.sheetarea { flex: 1; display: flex; min-height: 0; }
.viewport { flex: 1; min-width: 0; overflow: hidden; background: #fff; }
table { width: 100%; table-layout: fixed; border-collapse: separate; border-spacing: 0; }
.cn { width: 22px; }
.ca { width: 18px; }
.cb { width: 106px; }
.cc { width: 334px; }
.ct { width: 13px; }
th, td { padding: 0; }
th { font-weight: 400; background: #e1e1df; border-right: 1px solid #c0c0be; border-bottom: 1px solid #c0c0be; color: #444; }
thead th { height: 14px; line-height: 12px; border-top: 1px solid #c0c0be; }
tbody th { font-size: 10px; }
th.corner { background: #f5f5f3; border-color: transparent; }
th.sel { background: #3584e4; color: #fff; font-weight: 700; border-color: #2f78d0; }

.r-title { height: 29px; }
.r-gap { height: 14px; }
.r-head { height: 20px; }
.r-four { height: 47px; }
.r-ten { height: 119px; }
.r-lists { height: 47px; }
.r-three { height: 36px; }
.r-seven { height: 83px; }
.r-two { height: 25px; }

td { font-family: Carlito, Calibri, Lato, sans-serif; }
.title {
  position: relative;
  background: #1e3a8a;
  color: #fff;
  font-size: 11px;
  font-weight: 700;
  text-align: center;
  border-top: 1px solid #fff;
  border-right: 2px solid #3584e4;
  border-bottom: 2px solid #3584e4;
  box-shadow: inset -1px -1px #c8dcf6;
}
.handle { position: absolute; right: -3px; bottom: -3px; width: 5px; height: 5px; background: #3584e4; border: 1px solid #fff; }
.section { padding-left: 1px; background: #2563eb; color: #fff; font-size: 9px; line-height: 10px; font-weight: 700; }
.sq { display: inline-block; width: 11px; font: 8px/10px "DejaVu Sans", sans-serif; }
.label {
  padding-right: 2px;
  background: #dbeafe;
  color: #1e3a8a;
  font-size: 8px;
  line-height: 8px;
  font-weight: 700;
  border: solid #ccd3dd;
  border-width: 0 0 1px 1px;
}
.text { vertical-align: top; color: #111; font-size: 8px; line-height: 8px; border: solid #d4d4d4; border-width: 0 1px 1px 0; }
.lines { display: grid; grid-auto-rows: 1fr; white-space: pre; }
.lines p { margin: 0; }
.n2 { height: 17px; }
.n3 { height: 25px; }
.n4 { height: 33px; }
.n7 { height: 58px; }
.n10 { height: 83px; }
u { text-decoration: underline wavy #e8262e 1px; text-decoration-skip-ink: none; text-underline-offset: -1px; }

.vscroll { width: 10px; padding: 5px 2px; background: #cbcbcb; border-top: 2px solid #777; }
.vscroll i { display: block; height: 36%; width: 6px; border-radius: 3px; background: #808080; }
.hscroll { height: 10px; padding: 1px 2px; margin-right: 10px; background: #cbcbcb; border-right: 2px solid #777; }
.hscroll i { display: block; height: 8px; width: 47%; border-radius: 4px; background: #808080; }

.tabs { display: flex; align-items: stretch; height: 16px; padding-left: 6px; border-bottom: 1px solid #cfcfcd; font-size: 8px; }
.navs svg { width: 60px; height: 12px; }
.add { margin: 0 2px 0 8px; }
.add svg { width: 14px; height: 14px; }
.tab { position: relative; padding: 0 9px 0 10px; border-right: 1px solid transparent; }
.tab::after { content: ""; position: absolute; right: -1px; top: 4px; height: 8px; border-right: 1px solid #bbb; }
.tab.active { padding: 0 8px; background: #fff; font-weight: 700; border-bottom: 2px solid #777; }
.tab.active::after { display: none; }

aside { position: relative; width: 38px; display: flex; flex-direction: column; align-items: center; gap: 5px; padding: 3px 0 0; border-left: 1px solid #cfcfcd; }
.grip { position: absolute; left: -2px; top: 269px; width: 5px; height: 50px; background: #999; }
.grip::after { content: ""; position: absolute; left: 1px; top: 23px; border: 2px solid transparent; border-left: 3px solid #fff; border-right: 0; }

footer { display: grid; grid-template-columns: 177fr 219fr 213fr 166fr 46fr 29px 20px 20px 183fr 96px 32px; align-items: center; height: 17px; font-size: 8px; }
footer > div { height: 14px; line-height: 14px; padding-left: 5px; border-right: 1px solid #e2e2e0; white-space: nowrap; }
footer > div:last-child { border: 0; }
footer .mid { padding: 0; text-align: center; }
footer .doc { display: flex; gap: 9px; align-items: center; }
.disk { width: 13px; height: 13px; }
.mode { width: 20px; height: 12px; }
footer .zoom { display: flex; align-items: center; }
.zoom button { width: 14px; font-size: 14px; font-weight: 700; line-height: 12px; }
.zoom input { appearance: none; flex: 1; min-width: 0; height: 9px; margin: 0; background: linear-gradient(#999, #999) center / 100% 1px no-repeat; }
.zoom input::-webkit-slider-thumb { appearance: none; width: 4px; height: 8px; border: 1px solid #555; background: #fff; }
```
